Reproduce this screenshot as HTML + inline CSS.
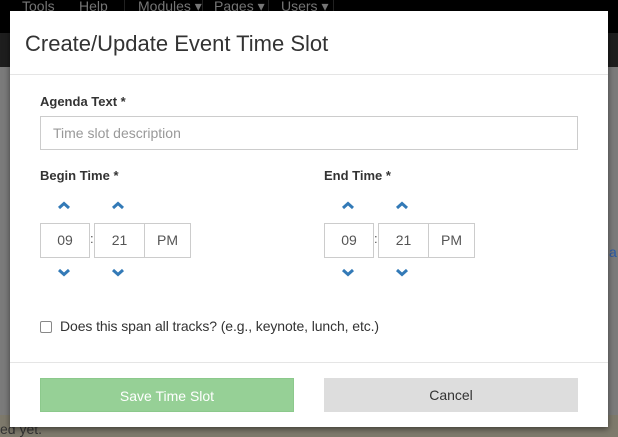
<!DOCTYPE html>
<html><head><style>
*{box-sizing:border-box;margin:0;padding:0}
body{width:618px;height:437px;overflow:hidden;position:relative;background:#7b7b7b;font-family:"Liberation Sans",sans-serif}
.top{position:absolute;left:0;top:0;width:618px;height:33px;background:#000}
.bar2{position:absolute;left:0;top:33px;width:618px;height:34px;background:#1e1e1e}
.nav{position:absolute;top:-2px;color:#777;font-size:14px}
.sep{position:absolute;top:0;width:1px;height:12px;background:#222}
.low{position:absolute;left:0;top:415px;width:618px;height:22px;background:#7e7a6c}
.modal{position:absolute;left:10px;top:11px;width:598px;height:416px;background:#fff;box-shadow:0 2px 6px rgba(0,0,0,.5)}
h1{position:absolute;left:15px;top:20px;font-size:22px;font-weight:normal;color:#333}
.hr{position:absolute;left:0;width:598px;height:1px;background:#e5e5e5}
.lbl{position:absolute;font-size:13px;font-weight:bold;color:#333}
.inp{position:absolute;border:1px solid #ccc;background:#fff;font-size:14px;color:#555;text-align:center;line-height:32px}
.chev{position:absolute;width:14px;height:9px}
.btn{position:absolute;top:367px;width:254px;height:34px;font-size:14px;text-align:center;line-height:34px}
</style></head><body>
<div class="top">
<span class="nav" style="left:22px">Tools</span><span class="nav" style="left:79px">Help</span>
<div class="sep" style="left:124px"></div><div class="sep" style="left:202px"></div><div class="sep" style="left:268px"></div><div class="sep" style="left:333px"></div>
<span class="nav" style="left:138px">Modules ▾</span><span class="nav" style="left:214px">Pages ▾</span><span class="nav" style="left:281px">Users ▾</span>
</div>
<div class="bar2"></div>
<div class="low"><span style="position:absolute;left:0;top:6px;font-size:14px;color:#333">ed yet.</span></div>
<span style="position:absolute;left:609px;top:244px;font-size:14px;color:#2a5aa8">a</span>
<div class="modal">
<h1>Create/Update Event Time Slot</h1>
<div class="hr" style="top:63px"></div>
<div class="lbl" style="left:30px;top:83px">Agenda Text *</div>
<div class="inp" style="left:30px;top:105px;width:538px;height:34px;text-align:left;padding-left:12px;color:#999">Time slot description</div>
<div class="lbl" style="left:30px;top:157px">Begin Time *</div>
<div class="lbl" style="left:314px;top:157px">End Time *</div>

<svg class="chev" style="left:47px;top:190px" viewBox="0 0 14 9"><path d="M2 7L7 2.5L12 7" stroke="#337ab7" stroke-width="3" fill="none"/></svg>
<svg class="chev" style="left:101px;top:190px" viewBox="0 0 14 9"><path d="M2 7L7 2.5L12 7" stroke="#337ab7" stroke-width="3" fill="none"/></svg>
<div class="inp" style="left:30px;top:212px;width:50px;height:35px">09</div>
<div style="position:absolute;left:80px;top:220px;font-size:13px;color:#555">:</div>
<div class="inp" style="left:84px;top:212px;width:51px;height:35px">21</div>
<div class="inp" style="left:134px;top:212px;width:47px;height:35px">PM</div>
<svg class="chev" style="left:47px;top:257px" viewBox="0 0 14 9"><path d="M2 2L7 6.5L12 2" stroke="#337ab7" stroke-width="3" fill="none"/></svg>
<svg class="chev" style="left:101px;top:257px" viewBox="0 0 14 9"><path d="M2 2L7 6.5L12 2" stroke="#337ab7" stroke-width="3" fill="none"/></svg>

<svg class="chev" style="left:331px;top:190px" viewBox="0 0 14 9"><path d="M2 7L7 2.5L12 7" stroke="#337ab7" stroke-width="3" fill="none"/></svg>
<svg class="chev" style="left:385px;top:190px" viewBox="0 0 14 9"><path d="M2 7L7 2.5L12 7" stroke="#337ab7" stroke-width="3" fill="none"/></svg>
<div class="inp" style="left:314px;top:212px;width:50px;height:35px">09</div>
<div style="position:absolute;left:364px;top:220px;font-size:13px;color:#555">:</div>
<div class="inp" style="left:368px;top:212px;width:51px;height:35px">21</div>
<div class="inp" style="left:418px;top:212px;width:47px;height:35px">PM</div>
<svg class="chev" style="left:331px;top:257px" viewBox="0 0 14 9"><path d="M2 2L7 6.5L12 2" stroke="#337ab7" stroke-width="3" fill="none"/></svg>
<svg class="chev" style="left:385px;top:257px" viewBox="0 0 14 9"><path d="M2 2L7 6.5L12 2" stroke="#337ab7" stroke-width="3" fill="none"/></svg>

<div style="position:absolute;left:30px;top:310px;width:12px;height:12px;border:1px solid #888;border-radius:2px"></div>
<div style="position:absolute;left:50px;top:307px;font-size:14px;color:#333;letter-spacing:-0.1px">Does this span all tracks? (e.g., keynote, lunch, etc.)</div>
<div class="hr" style="top:351px"></div>
<div class="btn" style="left:30px;background:#96d096;border:1px solid #8cc98c;color:#fff">Save Time Slot</div>
<div class="btn" style="left:314px;background:#ddd;color:#333">Cancel</div>
</div>
</body></html>
